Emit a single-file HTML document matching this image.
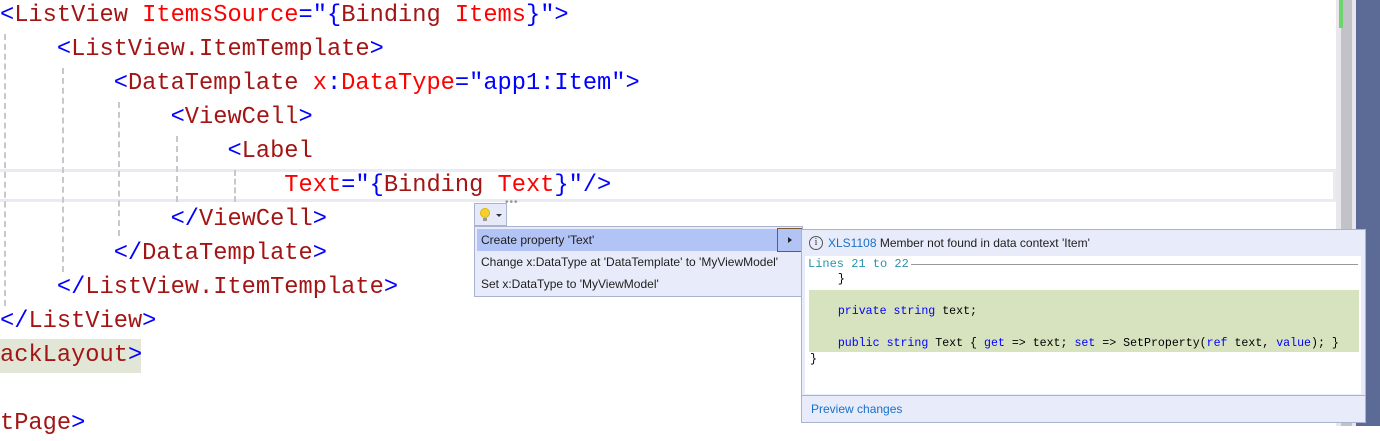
<!DOCTYPE html>
<html><head><meta charset="utf-8"><style>
*{margin:0;padding:0;box-sizing:border-box}
body{width:1380px;height:426px;overflow:hidden;background:#fff;position:relative;font-family:"Liberation Sans",sans-serif}
.l{position:absolute;left:0;height:34px;line-height:34px;font-family:"Liberation Mono",monospace;font-size:23.7px;white-space:pre;color:#a31515}
.b{color:#0000ff}.r{color:#ff0000}.k{color:#000}
.g{position:absolute;width:0;border-left:2px dashed #c8c8c8}
.cl{position:absolute;left:0;top:169px;width:1336px;height:33px;border:3px solid #eaeaf2;border-left:none}
.mono{font-family:"Liberation Mono",monospace}
</style></head><body>
<div class="cl"></div>
<div class="g" style="left:4px;top:34px;height:272px"></div>
<div class="g" style="left:62px;top:68px;height:204px"></div>
<div class="g" style="left:118px;top:102px;height:134px"></div>
<div class="g" style="left:176px;top:136px;height:66px"></div>
<div class="g" style="left:234px;top:170px;height:32px"></div>

<div class="l" style="top:-1px"><span class="b">&lt;</span>ListView <span class="r">ItemsSource</span><span class="b">="{</span>Binding <span class="r">Items</span><span class="b">}"&gt;</span></div>
<div class="l" style="top:33px">    <span class="b">&lt;</span>ListView.ItemTemplate<span class="b">&gt;</span></div>
<div class="l" style="top:67px">        <span class="b">&lt;</span>DataTemplate <span class="r">x</span><span class="b">:</span><span class="r">DataType</span><span class="b">="app1:Item"&gt;</span></div>
<div class="l" style="top:101px">            <span class="b">&lt;</span>ViewCell<span class="b">&gt;</span></div>
<div class="l" style="top:135px">                <span class="b">&lt;</span>Label</div>
<div class="l" style="top:169px">                    <span class="r">Text</span><span class="b">="{</span>Binding <span class="r">Text</span><span class="b">}"/&gt;</span></div>
<div class="l" style="top:203px">            <span class="b">&lt;/</span>ViewCell<span class="b">&gt;</span></div>
<div class="l" style="top:237px">        <span class="b">&lt;/</span>DataTemplate<span class="b">&gt;</span></div>
<div class="l" style="top:271px">    <span class="b">&lt;/</span>ListView.ItemTemplate<span class="b">&gt;</span></div>
<div class="l" style="top:305px"><span class="b">&lt;/</span>ListView<span class="b">&gt;</span></div>
<div class="l" style="top:339px;background:#e2e6d6;width:141px">ackLayout<span class="b">&gt;</span></div>
<div class="l" style="top:407px">tPage<span class="b">&gt;</span></div>

<div style="position:absolute;left:505px;top:197px;color:#999;font-size:10px;letter-spacing:1px">•••</div>

<!-- scrollbar -->
<div style="position:absolute;left:1336px;top:0;width:20px;height:426px;background:#e8e8ec"></div>
<div style="position:absolute;left:1341px;top:0;width:11px;height:426px;background:#c2c3c9"></div>
<div style="position:absolute;left:1339px;top:0;width:4px;height:28px;background:#6ed46e"></div>
<div style="position:absolute;left:1356px;top:0;width:24px;height:426px;background:#5c6a96"></div>

<!-- lightbulb -->
<div style="position:absolute;left:474px;top:203px;width:33px;height:23px;background:#e6eaf8;border:1px solid #a9b3d0">
<svg width="33" height="22" style="position:absolute;left:0;top:0"><circle cx="10" cy="9" r="4.5" fill="#f5d033" stroke="#e1b400"/><rect x="8" y="14" width="4" height="3" fill="#999"/><path d="M21 10h6l-3 3z" fill="#333"/></svg></div>

<!-- menu -->
<div style="position:absolute;left:474px;top:226px;width:329px;height:71px;background:#e8ecfa;border:1px solid #a9b3d0;font-size:12px;color:#1e1e1e">
<div style="position:absolute;left:2px;top:2px;width:325px;height:22px;background:#b2c4f5"></div>
<div style="position:absolute;left:302px;top:1px;width:25px;height:24px;border:1px solid #7a5a2a;background:#b2c4f5"><svg width="23" height="22"><path d="M10 8l4 3-4 3z" fill="#222"/></svg></div>
<div style="position:absolute;left:6px;top:6px">Create property 'Text'</div>
<div style="position:absolute;left:6px;top:28px">Change x:DataType at 'DataTemplate' to 'MyViewModel'</div>
<div style="position:absolute;left:6px;top:50px">Set x:DataType to 'MyViewModel'</div>
</div>

<!-- preview -->
<div style="position:absolute;left:801px;top:229px;width:565px;height:194px;background:#e8ecfa;border:1px solid #a9b3d0">
<div style="position:absolute;left:7px;top:6px;width:14px;height:14px;border:1px solid #555;border-radius:50%;font-size:10px;line-height:12px;text-align:center;font-family:'Liberation Serif',serif;color:#333">i</div>
<div style="position:absolute;left:26px;top:6px;font-size:12px;color:#1e1e1e"><span style="color:#1a6fc8">XLS1108</span> Member not found in data context 'Item'</div>
<div style="position:absolute;left:3px;top:26px;width:556px;height:138px;background:#fff">
<div class="mono" style="position:absolute;left:3px;top:1px;font-size:12px;color:#2b91af">Lines 21 to 22</div>
<div style="position:absolute;left:106px;top:8px;width:447px;border-top:1px solid #999"></div>
<div style="position:absolute;left:4px;top:34px;width:550px;height:62px;background:#d7e2bf"></div>
<div class="mono" style="position:absolute;left:5px;top:16px;font-size:11.6px;line-height:16px;white-space:pre;color:#000">    }

    <span class="b">private</span> <span class="b">string</span> text;

    <span class="b">public</span> <span class="b">string</span> Text { <span class="b">get</span> =&gt; text; <span class="b">set</span> =&gt; SetProperty(<span class="b">ref</span> text, <span class="b">value</span>); }
}</div>
</div>
<div style="position:absolute;left:0;top:165px;width:563px;border-top:1px solid #a9b3d0"></div>
<div style="position:absolute;left:9px;top:172px;font-size:12px;color:#1a6fc8">Preview changes</div>
</div>
</body></html>
